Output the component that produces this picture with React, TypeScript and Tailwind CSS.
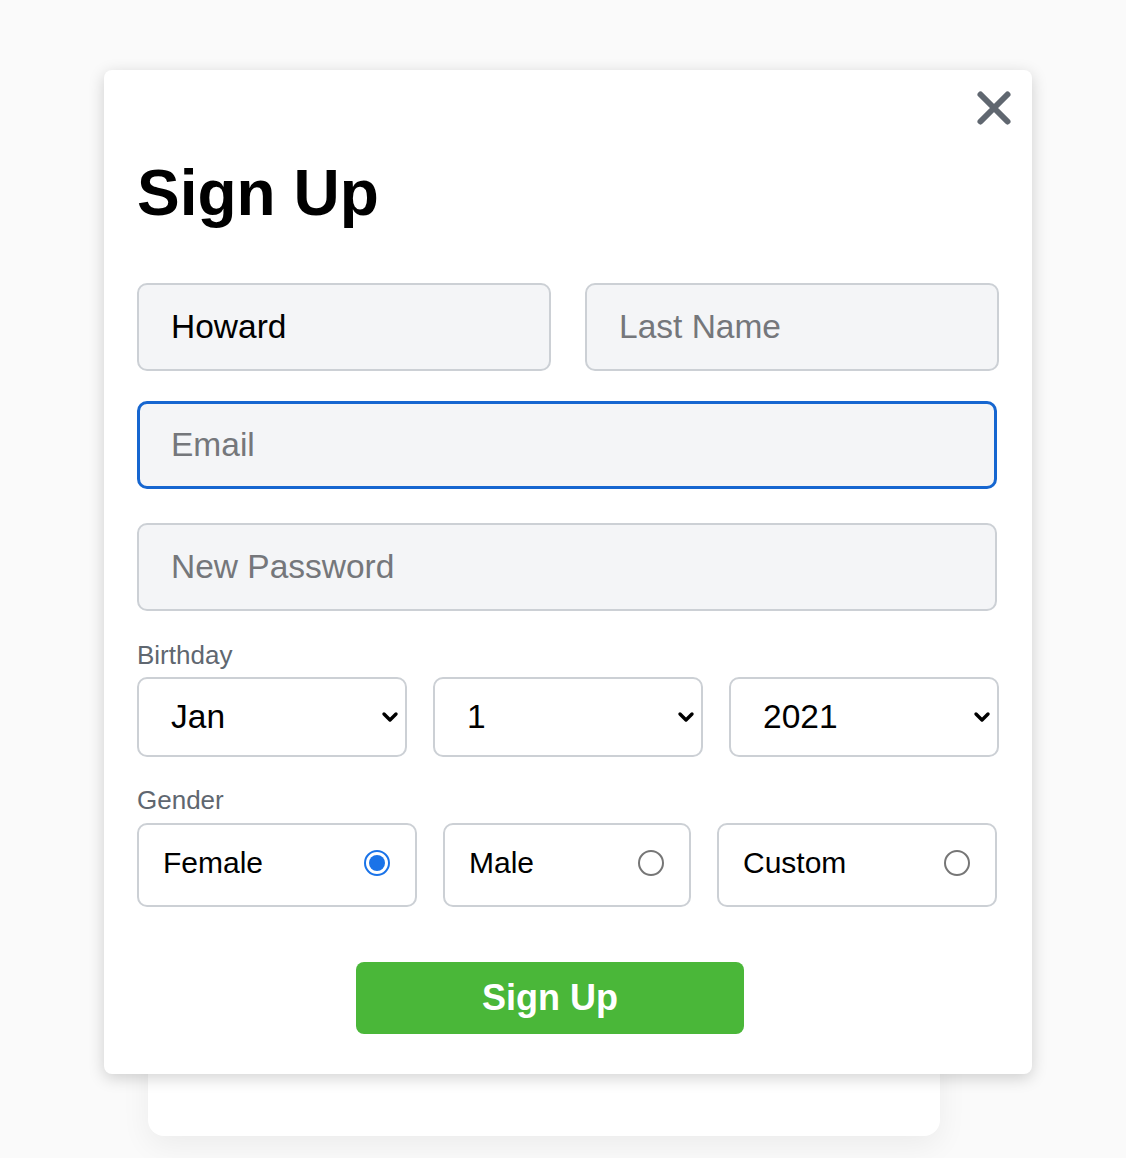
import React, { useState } from 'react';

const font = { fontFamily: '"Liberation Sans", Arial, sans-serif' };

function Chevron() {
  return (
    <svg width="18" height="12" viewBox="0 0 18 12" className="pointer-events-none absolute right-[8px] top-1/2 -translate-y-1/2">
      <path d="M3 3l6 6 6-6" fill="none" stroke="#000" strokeWidth="3.4" strokeLinecap="round" strokeLinejoin="round" />
    </svg>
  );
}

function Radio({ checked }: { checked: boolean }) {
  return checked ? (
    <span className="flex h-[26px] w-[26px] items-center justify-center rounded-full border-2 border-[#1a73e8] bg-white">
      <span className="h-[16px] w-[16px] rounded-full bg-[#1a73e8]" />
    </span>
  ) : (
    <span className="h-[26px] w-[26px] rounded-full border-2 border-[#767676] bg-white" />
  );
}

export default function App() {
  const [gender, setGender] = useState('Female');

  const selectCls =
    'h-[80px] w-[270px] appearance-none rounded-[10px] border-2 border-[#ccd0d5] bg-white pl-[32px] text-[33.5px] text-black outline-none';

  return (
    <div className="relative min-h-[1158px] bg-[#fafafa]" style={font}>
      {/* page card behind the modal */}
      <div className="ml-[148px] h-[1136px] w-[792px] pt-[100px]">
        <div className="h-full w-full rounded-b-2xl bg-white shadow-[0_10px_30px_rgba(0,0,0,0.06)]" />
      </div>

      {/* modal */}
      <div className="absolute left-[104px] top-[70px] w-[928px] rounded-lg bg-white px-[33px] pb-[40px] pt-[86px] shadow-[0_4px_16px_rgba(0,0,0,0.18)]">
        <button className="absolute right-[20px] top-[20px] p-0">
          <svg width="36" height="36" viewBox="0 0 36 36">
            <path d="M4.5 4.5l27 27M31.5 4.5l-27 27" stroke="#606770" strokeWidth="6" strokeLinecap="round" />
          </svg>
        </button>

        <h1 className="text-[64px] font-bold leading-[74px] text-black">Sign Up</h1>

        <div className="mt-[53px] flex gap-[34px]">
          <input
            defaultValue="Howard"
            className="h-[88px] w-[414px] rounded-[10px] border-2 border-[#ccd0d5] bg-[#f4f5f7] px-[32px] text-[33.5px] text-black outline-none"
          />
          <input
            placeholder="Last Name"
            className="h-[88px] w-[414px] rounded-[10px] border-2 border-[#ccd0d5] bg-[#f4f5f7] px-[32px] text-[33.5px] text-black outline-none placeholder:text-[#75777b]"
          />
        </div>

        <input
          placeholder="Email"
          autoFocus
          className="mt-[30px] h-[88px] w-[860px] rounded-[10px] border-[3px] border-[#1666d0] bg-[#f4f5f7] px-[31px] text-[33.5px] text-black caret-black outline-none placeholder:text-[#75777b]"
        />

        <input
          type="password"
          placeholder="New Password"
          className="mt-[34px] h-[88px] w-[860px] rounded-[10px] border-2 border-[#ccd0d5] bg-[#f4f5f7] px-[32px] text-[33.5px] text-black outline-none placeholder:text-[#75777b]"
        />

        <div className="mt-[29px] text-[26px] leading-[30px] text-[#606770]">Birthday</div>
        <div className="mt-[7px] flex gap-[26px]">
          <div className="relative">
            <select className={selectCls} defaultValue="Jan">
              <option>Jan</option>
              <option>Feb</option>
              <option>Mar</option>
            </select>
            <Chevron />
          </div>
          <div className="relative">
            <select className={selectCls} defaultValue="1">
              <option>1</option>
              <option>2</option>
              <option>3</option>
            </select>
            <Chevron />
          </div>
          <div className="relative">
            <select className={selectCls} defaultValue="2021">
              <option>2021</option>
              <option>2020</option>
              <option>2019</option>
            </select>
            <Chevron />
          </div>
        </div>

        <div className="mt-[28px] text-[26px] leading-[30px] text-[#606770]">Gender</div>
        <div className="mt-[8px] flex gap-[26px]">
          {[
            { label: 'Female', w: 'w-[280px]' },
            { label: 'Male', w: 'w-[248px]' },
            { label: 'Custom', w: 'w-[280px]' },
          ].map(g => (
            <label
              key={g.label}
              onClick={() => setGender(g.label)}
              className={`flex h-[84px] ${g.w} cursor-pointer items-center justify-between rounded-[10px] border-2 border-[#ccd0d5] pb-[5px] pl-[24px] pr-[25px] text-[30px] text-black`}
            >
              <span>{g.label}</span>
              <Radio checked={gender === g.label} />
            </label>
          ))}
        </div>

        <div className="mt-[55px] flex">
          <button className="ml-[219px] h-[72px] w-[388px] rounded-lg bg-[#4ab739] text-[36px] font-bold text-white">
            Sign Up
          </button>
        </div>
      </div>
    </div>
  );
}
